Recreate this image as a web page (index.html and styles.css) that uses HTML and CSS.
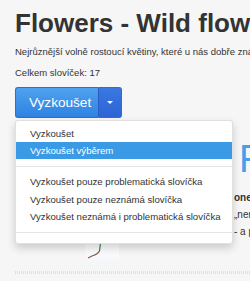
FILE: index.html
```html
<!DOCTYPE html>
<html lang="cs">
<head>
    <meta charset="UTF-8">
    <meta name="viewport" content="width=device-width, initial-scale=1.0">
    <title>Flowers - Wild flowers</title>
    <link rel="stylesheet" href="styles.css">
</head>
<body>
    <div class="page">
        <h1 class="title">Flowers - Wild flowers</h1>
        <p class="lead">Nejrůznější volně rostoucí květiny, které u nás dobře znáte</p>
        <p class="count">Celkem slovíček: 17</p>

        <div class="btn-group">
            <button class="btn btn-main">Vyzkoušet</button>
            <button class="btn btn-caret"><span class="caret"></span></button>

            <ul class="dropdown">
                <li><a href="#">Vyzkoušet</a></li>
                <li class="active"><a href="#">Vyzkoušet výběrem</a></li>
                <li class="divider"></li>
                <li><a href="#">Vyzkoušet pouze problematická slovíčka</a></li>
                <li><a href="#">Vyzkoušet pouze neznámá slovíčka</a></li>
                <li><a href="#">Vyzkoušet neznámá i problematická slovíčka</a></li>
                <li class="divider"></li>
            </ul>
        </div>

        <div class="word">
            <div class="word-pic">
                <div class="pic">
                    <svg width="34" height="132" viewBox="0 0 34 132">
                        <path d="M16 100 L15.5 113 L14.5 121" fill="none" stroke="#3f7a5a" stroke-width="1.2"/>
                        <path d="M14.5 121 C13 124 10 125 7 126 L3 128" fill="none" stroke="#8a5a3a" stroke-width="1.2"/>
                    </svg>
                </div>
            </div>
            <div class="word-info">
                <h2>Flowers</h2>
                <p><strong>onemone</strong></p>
                <p>„nemorosa“</p>
                <p>- a podobné</p>
            </div>
        </div>

        <div class="rule"></div>
    </div>
</body>
</html>
```

FILE: styles.css
```css
body {
    margin: 0;
    background-color: #f6f6f6;
    font-family: "Liberation Sans", Arial, sans-serif;
    color: #333;
    overflow: hidden;
}
.page {
    padding: 0 0 0 15px;
    width: 400px;
}
.title {
    font-size: 26px;
    line-height: 1.1;
    font-weight: bold;
    margin: 9px 0 7px;
    white-space: nowrap;
}
.lead, .count {
    font-size: 9.5px;
    line-height: 14.3px;
    margin: 0 0 7px;
    white-space: nowrap;
}
.btn-group {
    position: relative;
    display: inline-flex;
}
.btn {
    height: 31px;
    border: 1px solid #2c6fd0;
    color: #fff;
    font-family: inherit;
    cursor: pointer;
    display: flex;
    align-items: center;
}
.btn-main {
    width: 83px;
    padding: 0 0 0 13px;
    font-size: 13.6px;
    background: linear-gradient(#4ea2ee, #2f82e2);
    border-radius: 3px 0 0 3px;
    border-right: none;
}
.btn-caret {
    width: 24px;
    justify-content: center;
    padding: 0;
    background: linear-gradient(#3b78e0, #2c63d6);
    border-radius: 0 3px 3px 0;
    border-left: 1px solid #2a5cc4;
}
.caret {
    width: 0;
    height: 0;
    border-top: 3px solid #fff;
    border-left: 3px solid transparent;
    border-right: 3px solid transparent;
}
.dropdown {
    position: absolute;
    top: 33px;
    left: 0;
    z-index: 10;
    width: 216px;
    margin: 0;
    padding: 3.5px 0;
    list-style: none;
    background-color: #fff;
    border: 1px solid rgba(0, 0, 0, 0.12);
    border-radius: 3px;
    box-shadow: 0 4px 9px rgba(0, 0, 0, 0.18);
}
.dropdown a {
    display: block;
    padding: 0 0 0 14px;
    font-size: 9.6px;
    line-height: 17.3px;
    color: #333;
    text-decoration: none;
    white-space: nowrap;
}
.dropdown .active a {
    background-color: #3b9ae6;
    color: #fff;
}
.dropdown .divider {
    height: 1px;
    margin: 6.5px 0;
    background-color: #e5e5e5;
}
.word {
    display: flex;
    margin-top: 12px;
    height: 132px;
}
.word-pic {
    width: 219px;
    flex: none;
}
.pic {
    width: 34px;
    height: 132px;
    margin-left: 70px;
    background: linear-gradient(#ffffff 85%, #f4f7fa);
}
.word-info h2 {
    font-size: 38px;
    line-height: 1.1;
    font-weight: normal;
    color: #4a9de9;
    margin: 9px 0 8px 5px;
    white-space: nowrap;
}
.word-info p {
    font-size: 10px;
    line-height: 17px;
    margin: 0;
    white-space: nowrap;
}
.rule {
    margin-top: 9px;
    height: 3px;
    background-image: repeating-linear-gradient(90deg, #e0e0e0 0 1px, transparent 1px 2px);
}
```
